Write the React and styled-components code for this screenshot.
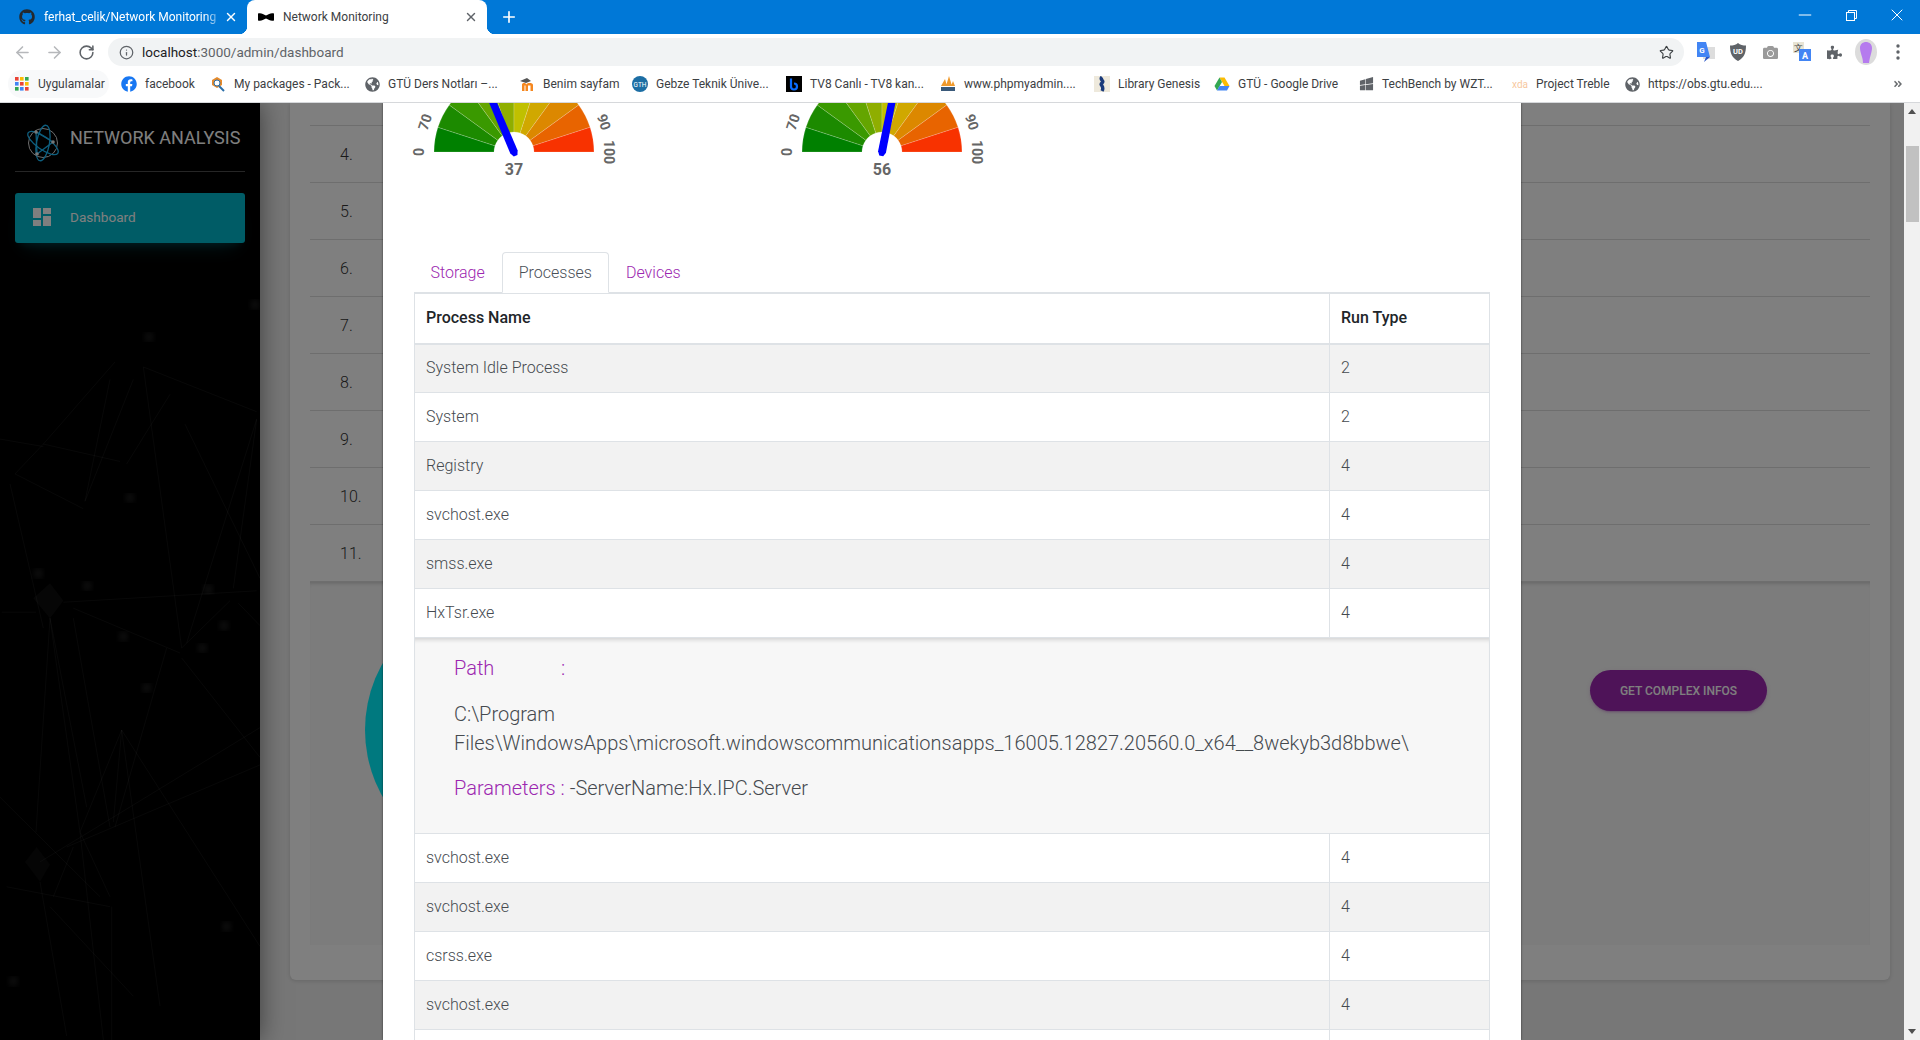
import React from 'react';
import styled, { createGlobalStyle } from 'styled-components';
import { ArrowLeft, ArrowRight, RotateCw, Info, Star, X, Plus, Minus } from 'lucide-react';
import { FaGithub, FaFacebook, FaGlobeAmericas, FaWindows, FaCamera, FaPuzzlePiece, FaAngleDoubleRight } from 'react-icons/fa';
import { MdDashboard } from 'react-icons/md';

const Global = createGlobalStyle`
  html, body { margin: 0; padding: 0; height: 100%; overflow: hidden; }
  body { font-family: Roboto, "Liberation Sans", sans-serif; }
  * { box-sizing: border-box; }
`;

const Page = styled.div`
  width: 1920px; height: 1040px; display: flex; flex-direction: column; overflow: hidden; background: #fff;
`;
const TabStrip = styled.div`
  height: 34px; flex: none; background: #0078d7; display: flex; align-items: stretch; color: #fff;
`;
const BrowserTab = styled.div`
  position: relative; width: ${p => p.$w}px; flex: none; display: flex; align-items: center;
  padding-left: ${p => p.$pl}px; font-size: 12px;
  color: ${p => (p.$active ? '#3c4043' : '#fff')};
  background: ${p => (p.$active ? '#fff' : 'transparent')};
  border-radius: 8px 8px 0 0;
  ${p => p.$active && `
    &::before, &::after {
      content: ''; position: absolute; bottom: 0; width: 8px; height: 8px;
    }
    &::before { left: -8px; background: radial-gradient(circle at 0 0, transparent 8px, #fff 8.5px); }
    &::after { right: -8px; background: radial-gradient(circle at 100% 0, transparent 8px, #fff 8.5px); }
  `}
`;
const TabTitle = styled.span`
  flex: 1; min-width: 0; white-space: nowrap; overflow: hidden; margin-left: ${p => p.$gap}px;
  ${p => p.$fade && `-webkit-mask-image: linear-gradient(90deg, #000 90%, transparent 100%);`}
`;
const TabClose = styled.span`
  display: flex; width: 16px; margin-right: 8px; justify-content: center;
`;
const NewTab = styled.span`
  display: flex; align-items: center; margin-left: 13px;
`;
const WindowControls = styled.div`
  margin-left: auto; display: flex; align-items: flex-start; padding-top: 5px;
`;
const WinButton = styled.span`
  width: 46px; height: 20px; display: flex; align-items: center; justify-content: center;
`;
const Toolbar = styled.div`
  height: 36px; flex: none; display: flex; align-items: flex-start; padding-top: 4px; background: #fff;
`;
const NavButton = styled.span`
  width: 32px; height: 28px; display: flex; align-items: center; justify-content: center;
  color: ${p => p.$color};
  &:first-child { margin-left: 6px; }
`;
const AddressBar = styled.div`
  width: 1576px; height: 28px; margin-left: 6px; border-radius: 14px; background: #f1f3f4; display: flex; align-items: center;
  padding: 0 10px 0 11px; font-size: 13.5px; color: #5f6368;
`;
const UrlHost = styled.span` color: #202124; margin-left: 8px; `;
const StarSlot = styled.span` margin-left: auto; display: flex; color: #3c4043; `;
const Extensions = styled.div` display: flex; margin-left: 6px; align-items: center; height: 28px; `;
const ExtSlot = styled.span`
  width: 32px; height: 28px; display: flex; align-items: center; justify-content: center; color: ${p => p.$color || '#5f6368'};
`;
const BookmarkBar = styled.div`
  height: 33px; flex: none; display: flex; align-items: center; padding: 0 0 4px 14px; background: #fff;
  border-bottom: 1px solid #d6d8db; font-size: 12px; color: #3c4043; position: relative;
`;
const Bookmark = styled.div`
  width: ${p => p.$w}px; flex: none; display: flex; align-items: center; gap: 8px; white-space: nowrap; position: relative;
  ${p => p.$hover && `
    &::before { content: ''; position: absolute; left: -6px; top: -6px; bottom: -6px; right: 12px; background: #f8f9fa; border-radius: 14px; z-index: 0; }
    & > * { position: relative; }
  `}
`;
const IconBox = styled.span` width: 16px; height: 16px; flex: none; display: flex; align-items: center; justify-content: center; color: ${p => p.$color || '#5f6368'}; `;
const MoreBookmarks = styled.span` margin-left: auto; margin-right: 17px; display: flex; color: #6a6d70; `;

const Stage = styled.div` flex: 1; min-height: 0; display: flex; `;
const Viewport = styled.div` flex: 1; position: relative; display: flex; overflow: hidden; background: #eee; `;
const Sidebar = styled.aside`
  width: 260px; flex: none; position: relative; z-index: 1; background: #000; padding: 0 15px; box-shadow: 0 0 24px rgba(0,0,0,.5); overflow: hidden;
`;
const Texture = styled.svg` position: absolute; left: 0; bottom: 0; width: 262px; height: 780px; `;
const Brand = styled.div`
  position: relative; height: 69px; display: flex; align-items: center; gap: 9px; padding: 12px 0 0 10px; border-bottom: 1px solid rgba(255,255,255,.3);
`;
const BrandName = styled.span` color: #fff; font-size: 18px; white-space: nowrap; margin-top: -12px; `;
const NavItem = styled.div`
  position: relative; margin-top: 21px; height: 50px; border-radius: 3px; background: #00b8cc; color: #fff; font-size: 13.6px; font-weight: 400;
  display: flex; align-items: center; gap: 16px; padding: 0 0 2px 15px;
  box-shadow: 0 12px 20px -10px rgba(0,188,212,.28), 0 4px 20px 0 rgba(0,0,0,.12), 0 7px 8px -5px rgba(0,188,212,.2);
`;
const Main = styled.main` flex: 1; min-width: 0; padding: 0 14px 0 30px; `;
const Card = styled.section`
  background: #fff; border-radius: 0 0 6px 6px; padding: 0 20px 35px; box-shadow: 0 1px 4px rgba(0,0,0,.14);
`;
const ListRow = styled.div`
  height: ${p => p.$h}px; border-bottom: 1px solid #ddd; padding-left: 30px; display: flex; align-items: center; color: #333; font-size: 16px; font-weight: 300;
`;
const Panel = styled.div`
  height: 363px; background: #f8f8f8; display: flex; align-items: flex-start; box-shadow: inset 0 4px 4px -3px rgba(0,0,0,.2);
`;
const Pie = styled.div`
  width: 270px; height: 270px; margin: 13px 0 0 55px; border-radius: 50%; background: #00f2ff;
`;
const ActionButton = styled.button`
  margin: 88px 103px 0 auto; width: 177px; height: 41px; border: 0; border-radius: 21px; background: #9c27b0; color: #fff;
  font: 500 12px Roboto, sans-serif; text-transform: uppercase;
  box-shadow: 0 2px 2px 0 rgba(156,39,176,.14), 0 3px 1px -2px rgba(156,39,176,.2), 0 1px 5px 0 rgba(156,39,176,.12);
`;
const Dim = styled.div` position: absolute; inset: 0; z-index: 2; background: rgba(0,0,0,.5); `;
const Modal = styled.div`
  position: absolute; left: 383px; top: 0; bottom: 0; width: 1138px; z-index: 3; background: #fff; padding: 0 31px; overflow: hidden;
  box-shadow: 0 0 2px rgba(0,0,0,.6);
`;
const GaugeRow = styled.div` display: flex; gap: 128px; margin: -31px 0 0 -20px; `;
const TabsNav = styled.div`
  display: flex; margin-top: 70px; height: 41px; padding-left: 0; border-bottom: 1px solid #dee2e6; font-size: 16px; font-weight: 300;
`;
const TabLink = styled.div`
  height: 41px; padding: 0 16px; display: flex; align-items: center; color: ${p => (p.$active ? '#495057' : '#9c27b0')};
  border: 1px solid ${p => (p.$active ? '#dee2e6' : 'transparent')};
  border-bottom-color: ${p => (p.$active ? '#fff' : 'transparent')};
  border-radius: 4px 4px 0 0; background: ${p => (p.$active ? '#fff' : 'transparent')};
  &:first-child { margin-left: -.5px; }
`;
const Table = styled.table`
  width: 1076px; border-collapse: collapse; table-layout: fixed; font-size: 16px; color: #212529;
`;
const Th = styled.th`
  height: 50px; padding: 0 11px; text-align: left; font-weight: 500; border: 1px solid #dee2e6; border-bottom-width: 2px; line-height: 24px;
`;
const Tr = styled.tr` background: ${p => (p.$alt ? '#f2f2f2' : '#fff')}; `;
const Td = styled.td`
  height: 49px; padding: 0 11px; font-weight: 300; border: 1px solid #dee2e6; line-height: 24px; color: #454a4f;
`;
const DetailCell = styled.td`
  padding: 16px 39px 30px 39px; background: #f7f7f7; border: 1px solid #dee2e6; border-top: 0;
  box-shadow: inset 0 5px 4px -3px rgba(0,0,0,.14); font-size: 20px; font-weight: 300; line-height: 29px; color: #454a4f;
`;
const DetailLine = styled.p` margin: 0 0 ${p => p.$mb}px; word-break: normal; `;
const DetailLabel = styled.span`
  display: inline-block; min-width: ${p => p.$w || 0}px; color: #9c27b0;
`;
const Colon = styled.span` color: #9c27b0; `;

const Scrollbar = styled.div`
  width: 16px; flex: none; background: #f1f1f1; display: flex; flex-direction: column; align-items: center; position: relative;
`;
const ArrowUp = styled.span`
  margin-top: 6px; width: 0; height: 0; border: 4px solid transparent; border-top: 0; border-bottom: 5px solid #505050;
`;
const Thumb = styled.div` margin-top: 32px; width: 13px; height: 76px; background: #c1c1c1; `;
const ArrowDown = styled.span`
  margin-top: auto; margin-bottom: 6px; width: 0; height: 0; border: 4px solid transparent; border-bottom: 0; border-top: 5px solid #505050;
`;

const COLORS = ['#008000', '#1c8a00', '#3a9900', '#64a500', '#8fae00', '#c0c000', '#d0a800', '#dc8800', '#e86400', '#f83200'];
const polar = (r, a) => [120 - r * Math.cos(a), 80 - r * Math.sin(a)];
function segment(i) {
  const a0 = (i * Math.PI) / 10;
  const a1 = ((i + 1) * Math.PI) / 10;
  const [x0, y0] = polar(80, a0);
  const [x1, y1] = polar(80, a1);
  const [x2, y2] = polar(20, a1);
  const [x3, y3] = polar(20, a0);
  return `M${x0} ${y0}A80 80 0 0 1 ${x1} ${y1}L${x2} ${y2}A20 20 0 0 0 ${x3} ${y3}Z`;
}
const GaugeLabel = styled.text`
  font: 700 14px Roboto, sans-serif; fill: #666; text-anchor: middle; dominant-baseline: central;
`;
const GaugeValue = styled.text`
  font: 700 16px Roboto, sans-serif; fill: #666; text-anchor: middle;
`;
function Gauge({ value }) {
  const deg = (value / 100) * 180 - 90;
  return (
    <svg width="240" height="110" viewBox="0 0 240 110">
      {COLORS.map((c, i) => (
        <path key={c} d={segment(i)} fill={c} stroke="#fff" strokeOpacity=".35" strokeWidth=".5" />
      ))}
      <polygon transform={`rotate(${deg} 120 80)`} points="117,-2 123,-2 124,0 124,80 122,84 118,84 116,80" fill="#0000ff" />
      <GaugeLabel transform="translate(25 80) rotate(-90)">0</GaugeLabel>
      <GaugeLabel transform="translate(31 50) rotate(-72)">70</GaugeLabel>
      <GaugeLabel transform="translate(210 50) rotate(72)">90</GaugeLabel>
      <GaugeLabel transform="translate(215 80) rotate(90)">100</GaugeLabel>
      <GaugeValue x="120" y="103">{value}</GaugeValue>
    </svg>
  );
}

const TEX = [
  '45,430 130,370 360,405', '130,370 345,205', '0,360 130,375', '45,430 250,500', '255,485 400,240', '255,485 330,240',
  '430,215 770,305', '430,215 545,780', '380,410 510,270', '30,450 130,740', '190,688 770,665', '5,708 108,708',
  '770,320 560,770', '770,320 700,660', '555,330 780,640', '220,700 540,790', '545,780 690,685', '715,690 780,735',
  '545,800 780,1000', '150,720 108,1150', '150,720 260,1100', '150,720 240,1150 330,1280', '220,720 330,1140', '500,780 345,1140',
  '365,945 240,1150', '365,945 340,1130', '365,945 480,1500', '365,945 780,1380', '120,1210 780,940', '200,1180 780,1015',
  '0,1080 300,1280', '20,1260 330,1300', '120,1250 200,1560', '220,1180 160,1280', '335,1300 335,1568', '150,1300 400,1480', '240,1150 310,1568',
];
const GLOWS = [[447,155],[390,478],[262,655],[370,757],[607,780],[672,735],[440,860],[625,662],[40,1450],[680,1340],[115,630],[765,90]];
function SidebarTexture() {
  return (
    <Texture viewBox="0 0 786 1568" preserveAspectRatio="none">
      <defs>
        <filter id="glow"><feGaussianBlur stdDeviation="7" /></filter>
      </defs>
      {TEX.map(p => <polyline key={p} points={p} fill="none" stroke="#fff" strokeOpacity=".08" strokeWidth="2" />)}
      <polygon points="100,680 150,650 190,685 150,720" fill="#fff" fillOpacity=".05" />
      <polygon points="75,1210 110,1180 150,1215 120,1250" fill="#fff" fillOpacity=".04" />
      {GLOWS.map(([x, y]) => <ellipse key={x} cx={x} cy={y} rx="16" ry="8" fill="#fff" fillOpacity=".12" filter="url(#glow)" />)}
    </Texture>
  );
}

const Logo = () => (
  <svg width="36" height="38" viewBox="0 0 36 38" fill="none">
    <circle cx="18" cy="19" r="14.5" stroke="#ddd" strokeWidth="1" />
    <ellipse cx="18" cy="19" rx="18" ry="6.5" transform="rotate(35 18 19)" stroke="#1cbeff" strokeWidth="1.3" />
    <ellipse cx="18" cy="19" rx="18" ry="6.5" transform="rotate(-80 18 19)" stroke="#1cbeff" strokeWidth="1.3" />
    <path d="M11 8 L28 18 L12 30 Z" stroke="#1cbeff" strokeWidth="1.3" />
    <circle cx="11" cy="8" r="1.8" fill="#eee" /><circle cx="28" cy="18" r="1.8" fill="#eee" /><circle cx="12" cy="30" r="1.8" fill="#eee" />
  </svg>
);
const BowTie = () => (
  <svg width="16" height="16" viewBox="0 0 16 16"><path d="M0 4.5 C3 3.5 5 5 8 6.5 C11 5 13 3.5 16 4.5 V11.5 C13 12.5 11 11 8 9.5 C5 11 3 12.5 0 11.5Z" fill="#000" /></svg>
);
const AppsGrid = () => {
  const c = ['#ea4335','#fbbc04','#34a853','#4285f4','#ea4335','#fbbc04','#34a853','#4285f4','#ea4335'];
  return (
    <svg width="14" height="14" viewBox="0 0 14 14">
      {c.map((f, i) => <rect key={i} x={(i % 3) * 5} y={Math.floor(i / 3) * 5} width="3.6" height="3.6" fill={f} />)}
    </svg>
  );
};
const SmallText = styled.text` font-family: Roboto, sans-serif; font-weight: ${p => p.$w || 400}; `;
const PkgIcon = () => (
  <svg width="16" height="16" viewBox="0 0 16 16" fill="none"><path d="M7 1 L12 4 V9 L7 12 L2 9 V4Z" fill="#e58a2c" /><circle cx="7" cy="7" r="3" fill="#fff" stroke="#2a6ea8" /><path d="M9 10l5 5" stroke="#2a6ea8" strokeWidth="2" /></svg>
);
const MoodleIcon = () => (
  <svg width="16" height="16" viewBox="0 0 16 16"><path d="M1 5 L8 2 L12 5 L7 7Z" fill="#555" /><path d="M3 15 V8.5 C3 6.5 7 6.5 7.5 8.5 C8 6.5 14 6.5 14 9 V15 H11.5 V9.5 H9 V15 H6.5 V9.5 H5.5 V15Z" fill="#f5871f" /></svg>
);
const GtuIcon = () => (
  <svg width="16" height="16" viewBox="0 0 16 16"><circle cx="8" cy="8" r="8" fill="#1c6ea4" /><SmallText x="8" y="10.5" fontSize="6.5" fill="#fff" textAnchor="middle">GTH</SmallText></svg>
);
const BingIcon = () => (
  <svg width="16" height="16" viewBox="0 0 16 16"><rect width="16" height="16" fill="#000" /><path d="M5 2.5 V10.5 A3 3 0 1 0 8 7.5" fill="none" stroke="#0a6cff" strokeWidth="2.2" /></svg>
);
const PmaIcon = () => (
  <svg width="16" height="16" viewBox="0 0 16 16"><path d="M1 10 L5 3 L7 10Z M6 10 L9 0 L12 10Z M11 10 L13 5 L15 10Z" fill="#f09a2c" /><rect x="1" y="11" width="14" height="4" fill="#3a5a7a" /></svg>
);
const LibgenIcon = () => (
  <svg width="16" height="16" viewBox="0 0 16 16"><rect width="16" height="16" fill="#eee9dc" /><path d="M8 1 C5 4 11 5 8 7 C5 9 11 10 8 15" stroke="#1a3a7a" strokeWidth="3.4" fill="none" /></svg>
);
const DriveIcon = () => (
  <svg width="16" height="16" viewBox="0 0 16 16"><path d="M5.5 1.5 H10.5 L15.5 10 H10.5Z" fill="#fbbc04" /><path d="M5.5 1.5 L0.5 10 L3 14.5 L8 6Z" fill="#34a853" /><path d="M3 14.5 H13 L15.5 10 H5.5Z" fill="#4285f4" /></svg>
);
const XdaIcon = () => (
  <svg width="16" height="16" viewBox="0 0 16 16"><SmallText x="8" y="11.5" fontSize="10" fill="#f7c8a0" textAnchor="middle">xda</SmallText></svg>
);
const TranslateExt = () => (
  <svg width="18" height="20" viewBox="0 0 18 20"><rect x="6" y="5" width="12" height="12" fill="#ddd" /><path d="M0 0 H9 L13 15 H0Z" fill="#4285f4" /><path d="M9 15 L7 20 L13 15Z" fill="#2a56c6" /><SmallText x="5" y="11" fontSize="8" $w={700} fill="#fff" textAnchor="middle">G</SmallText></svg>
);
const UBlock = () => (
  <svg width="16" height="18" viewBox="0 0 16 18"><path d="M8 0 C10 2 13 2.5 16 2.5 C16 10 14 15 8 18 C2 15 0 10 0 2.5 C3 2.5 6 2 8 0Z" fill="#5f6368" /><SmallText x="8" y="11" fontSize="7.5" $w={700} fill="#fff" textAnchor="middle">UD</SmallText></svg>
);
const TranslateTwo = () => (
  <svg width="18" height="20" viewBox="0 0 18 20"><rect x="0" y="0" width="11" height="11" fill="#e8e4d4" /><SmallText x="5" y="9" fontSize="9" fill="#444" textAnchor="middle">文</SmallText><rect x="6" y="7" width="12" height="12" fill="#4285f4" /><SmallText x="12" y="17" fontSize="9" $w={700} fill="#fff" textAnchor="middle">A</SmallText></svg>
);
const Avatar = () => (
  <svg width="22" height="26" viewBox="0 0 22 26"><ellipse cx="11" cy="13" rx="11" ry="13" fill="#dcdcdc" /><path d="M8 24 C8 18 5 14 5 9 C5 5 8 3 11 3 C14 3 17 5 17 9 C17 13 15 17 14 24Z" fill="#b57bee" /></svg>
);
const Kebab = () => (
  <svg width="4" height="16" viewBox="0 0 4 16" fill="#5f6368"><circle cx="2" cy="2" r="1.7" /><circle cx="2" cy="8" r="1.7" /><circle cx="2" cy="14" r="1.7" /></svg>
);
const Restore = () => (
  <svg width="11" height="11" viewBox="0 0 11 11" fill="none" stroke="#fff"><rect x=".5" y="2.5" width="8" height="8" /><path d="M2.5 2.5 V.5 H10.5 V8.5 H8.5" /></svg>
);

const BOOKMARKS = [
  { w: 107, icon: <AppsGrid />, text: 'Uygulamalar', hover: true },
  { w: 89, icon: <FaFacebook size={16} color="#1877f2" />, text: 'facebook' },
  { w: 154, icon: <PkgIcon />, text: 'My packages - Pack...' },
  { w: 155, icon: <FaGlobeAmericas size={15} />, text: 'GTÜ Ders Notları –...' },
  { w: 113, icon: <MoodleIcon />, text: 'Benim sayfam' },
  { w: 154, icon: <GtuIcon />, text: 'Gebze Teknik Ünive...' },
  { w: 154, icon: <BingIcon />, text: 'TV8 Canlı - TV8 kan...' },
  { w: 154, icon: <PmaIcon />, text: 'www.phpmyadmin....' },
  { w: 120, icon: <LibgenIcon />, text: 'Library Genesis' },
  { w: 144, icon: <DriveIcon />, text: 'GTÜ - Google Drive' },
  { w: 154, icon: <FaWindows size={15} style={{ transform: 'skewY(-8deg)' }} />, text: 'TechBench by WZT...' },
  { w: 112, icon: <XdaIcon />, text: 'Project Treble' },
  { w: 160, icon: <FaGlobeAmericas size={15} />, text: 'https://obs.gtu.edu....' },
];
const TOP_ROWS = [['System Idle Process', 2, true], ['System', 2, false], ['Registry', 4, true], ['svchost.exe', 4, false], ['smss.exe', 4, true], ['HxTsr.exe', 4, false]];
const BOTTOM_ROWS = [['svchost.exe', 4, false], ['svchost.exe', 4, true], ['csrss.exe', 4, false], ['svchost.exe', 4, true], ['', '', false]];
const NUMBERS = ['4.', '5.', '6.', '7.', '8.', '9.', '10.', '11.'];

function ProcessRow({ name, type, alt }) {
  return <Tr $alt={alt}><Td>{name}</Td><Td>{type}</Td></Tr>;
}

export default function App() {
  return (
    <Page>
      <Global />
      <TabStrip>
        <BrowserTab $w={247} $pl={19}>
          <FaGithub size={16} color="#24292e" />
          <TabTitle $gap={9} $fade>ferhat_celik/Network Monitoring</TabTitle>
          <TabClose><X size={14} strokeWidth={2.4} /></TabClose>
        </BrowserTab>
        <BrowserTab $w={240} $pl={11} $active>
          <BowTie />
          <TabTitle $gap={9}>Network Monitoring</TabTitle>
          <TabClose><X size={14} strokeWidth={2.4} color="#5f6368" /></TabClose>
        </BrowserTab>
        <NewTab><Plus size={18} strokeWidth={2.2} /></NewTab>
        <WindowControls>
          <WinButton><Minus size={20} strokeWidth={1.2} /></WinButton>
          <WinButton><Restore /></WinButton>
          <WinButton><X size={20} strokeWidth={1.2} /></WinButton>
        </WindowControls>
      </TabStrip>
      <Toolbar>
        <NavButton $color="#b6b8bb"><ArrowLeft size={19} /></NavButton>
        <NavButton $color="#b6b8bb"><ArrowRight size={19} /></NavButton>
        <NavButton $color="#5f6368"><RotateCw size={17} strokeWidth={2.2} /></NavButton>
        <AddressBar>
          <Info size={15} color="#5f6368" />
          <UrlHost>localhost</UrlHost>:3000/admin/dashboard
          <StarSlot><Star size={15} strokeWidth={1.8} /></StarSlot>
        </AddressBar>
        <Extensions>
          <ExtSlot><TranslateExt /></ExtSlot>
          <ExtSlot><UBlock /></ExtSlot>
          <ExtSlot $color="#9a9a9a"><FaCamera size={15} /></ExtSlot>
          <ExtSlot><TranslateTwo /></ExtSlot>
          <ExtSlot><FaPuzzlePiece size={15} /></ExtSlot>
          <ExtSlot><Avatar /></ExtSlot>
          <ExtSlot><Kebab /></ExtSlot>
        </Extensions>
      </Toolbar>
      <BookmarkBar>
        {BOOKMARKS.map(b => (
          <Bookmark key={b.text} $w={b.w} $hover={b.hover}>
            <IconBox>{b.icon}</IconBox>
            <span>{b.text}</span>
          </Bookmark>
        ))}
        <MoreBookmarks><FaAngleDoubleRight size={10} /></MoreBookmarks>
      </BookmarkBar>
      <Stage>
        <Viewport>
          <Sidebar>
            <SidebarTexture />
            <Brand><Logo /><BrandName>NETWORK ANALYSIS</BrandName></Brand>
            <NavItem><MdDashboard size={24} />Dashboard</NavItem>
          </Sidebar>
          <Main>
            <Card>
              <ListRow $h={23} />
              {NUMBERS.map(n => <ListRow key={n} $h={57}>{n}</ListRow>)}
              <Panel>
                <Pie />
                <ActionButton>Get complex infos</ActionButton>
              </Panel>
            </Card>
          </Main>
          <Dim />
          <Modal>
            <GaugeRow>
              <Gauge value={37} />
              <Gauge value={56} />
            </GaugeRow>
            <TabsNav>
              <TabLink>Storage</TabLink>
              <TabLink $active>Processes</TabLink>
              <TabLink>Devices</TabLink>
            </TabsNav>
            <Table>
              <colgroup><col style={{ width: 915 }} /><col /></colgroup>
              <thead>
                <tr><Th>Process Name</Th><Th>Run Type</Th></tr>
              </thead>
              <tbody>
                {TOP_ROWS.map(([n, t, a], i) => <ProcessRow key={i} name={n} type={t} alt={a} />)}
                <tr>
                  <DetailCell colSpan={2}>
                    <DetailLine $mb={17}><DetailLabel $w={107}>Path</DetailLabel><Colon>:</Colon></DetailLine>
                    <DetailLine $mb={16}>C:\Program Files\WindowsApps\microsoft.windowscommunicationsapps_16005.12827.20560.0_x64__8wekyb3d8bbwe\</DetailLine>
                    <DetailLine $mb={0}><DetailLabel>Parameters</DetailLabel> <Colon>:</Colon> -ServerName:Hx.IPC.Server</DetailLine>
                  </DetailCell>
                </tr>
                {BOTTOM_ROWS.map(([n, t, a], i) => <ProcessRow key={i} name={n} type={t} alt={a} />)}
              </tbody>
            </Table>
          </Modal>
        </Viewport>
        <Scrollbar>
          <ArrowUp />
          <Thumb />
          <ArrowDown />
        </Scrollbar>
      </Stage>
    </Page>
  );
}
